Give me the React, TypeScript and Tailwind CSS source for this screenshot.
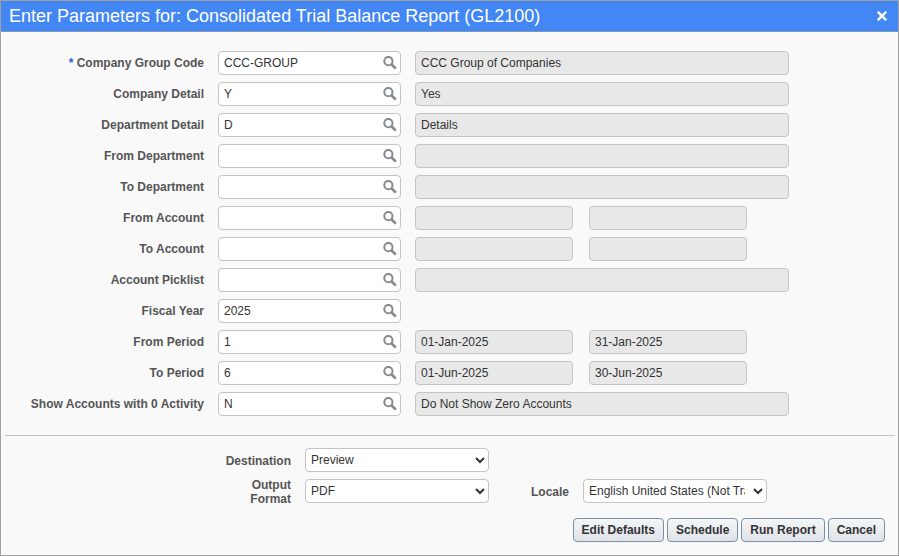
import { useId, useState } from "react";

type Param = {
  label: string;
  value: string;
  required?: boolean;
  wide?: string;
  pair?: [string, string];
};

const params: Param[] = [
  { label: "Company Group Code", value: "CCC-GROUP", required: true, wide: "CCC Group of Companies" },
  { label: "Company Detail", value: "Y", wide: "Yes" },
  { label: "Department Detail", value: "D", wide: "Details" },
  { label: "From Department", value: "", wide: "" },
  { label: "To Department", value: "", wide: "" },
  { label: "From Account", value: "", pair: ["", ""] },
  { label: "To Account", value: "", pair: ["", ""] },
  { label: "Account Picklist", value: "", wide: "" },
  { label: "Fiscal Year", value: "2025" },
  { label: "From Period", value: "1", pair: ["01-Jan-2025", "31-Jan-2025"] },
  { label: "To Period", value: "6", pair: ["01-Jun-2025", "30-Jun-2025"] },
  { label: "Show Accounts with 0 Activity", value: "N", wide: "Do Not Show Zero Accounts" },
];

const readOnlyBox =
  "h-6 rounded-[4px] border border-[#c4c4c4] bg-[#e8e8e8] px-[5px] text-xs text-[#333] outline-none";

const selectBox =
  "h-6 w-[184px] rounded-[4px] border border-[#c4c4c4] bg-white pr-[5px] pl-px text-xs text-[#333]";

const optionLabel = "pt-0.5 text-right leading-[14px] font-bold text-[#555]";

function SearchIcon() {
  return (
    <svg width="14" height="14" viewBox="0 0 14 14" fill="none" stroke="#858a8e" aria-hidden="true">
      <circle cx="5.4" cy="5.2" r="4.1" strokeWidth="2" />
      <path d="M8.4 8.2l4.4 4.4" strokeWidth="2.7" />
    </svg>
  );
}

function ParamRow({ label, value, required, wide, pair }: Param) {
  const id = useId();
  const [text, setText] = useState(value);
  return (
    <div className="flex items-center">
      <label htmlFor={id} className="w-[203px] shrink-0 text-right font-bold text-[#555]">
        {required && <span className="text-[#2a62c8]">* </span>}
        {label}
      </label>
      <div className="ml-3.5 flex h-6 w-[183px] shrink-0 items-center rounded-[4px] border border-[#c4c4c4] bg-white pr-[3px] pl-[5px]">
        <input
          id={id}
          value={text}
          onChange={(e) => setText(e.target.value)}
          className="min-w-0 flex-1 text-xs text-[#333] outline-none"
        />
        <button type="button" aria-label={`Look up ${label}`}>
          <SearchIcon />
        </button>
      </div>
      {wide !== undefined && (
        <input readOnly aria-label={`${label} description`} value={wide} className={`${readOnlyBox} ml-3.5 w-[374px]`} />
      )}
      {pair && (
        <div className="ml-3.5 flex gap-4">
          <input readOnly aria-label={`${label} first detail`} value={pair[0]} className={`${readOnlyBox} w-[158px]`} />
          <input readOnly aria-label={`${label} second detail`} value={pair[1]} className={`${readOnlyBox} w-[158px]`} />
        </div>
      )}
    </div>
  );
}

function ActionButton({ children }: { children: string }) {
  return (
    <button
      type="button"
      className="h-6 rounded-[4px] border border-[#7790a5] bg-linear-to-b from-[#f4f5f6] to-[#dfe3e8] px-2 font-bold text-[#333]"
    >
      {children}
    </button>
  );
}

export default function App() {
  return (
    <div className="flex min-h-screen flex-col border border-[#a0a0a0] bg-[#f9f9f9] font-['Liberation_Sans',Arial,sans-serif] text-xs text-[#333]">
      <header className="flex h-[31px] items-center justify-between border-b border-[#7f97bf] bg-[#4387f4] pr-[11px] pl-2 text-white">
        <h1 className="text-lg">Enter Parameters for: Consolidated Trial Balance Report (GL2100)</h1>
        <button type="button" aria-label="Close">
          <svg width="10" height="10" viewBox="0 0 10 10" stroke="white" strokeWidth="2.4" aria-hidden="true">
            <path d="M0.8 0.8L9.2 9.2M9.2 0.8L0.8 9.2" />
          </svg>
        </button>
      </header>

      <form className="flex flex-1 flex-col">
        <div className="flex flex-col gap-[7px] pt-[19px] pb-[19px]">
          {params.map((p) => (
            <ParamRow key={p.label} {...p} />
          ))}
        </div>

        <hr className="mr-[3px] ml-1 border-t border-[#c4c4c4]" />

        <div className="flex flex-col gap-[7px] pt-3">
          <div className="flex h-6 items-center">
            <label htmlFor="destination" className={`${optionLabel} w-[290px]`}>
              Destination
            </label>
            <select id="destination" className={`${selectBox} ml-3.5`}>
              <option>Preview</option>
            </select>
          </div>
          <div className="flex h-6 items-center">
            <label htmlFor="format" className={`${optionLabel} w-[290px]`}>
              Output
              <br />
              Format
            </label>
            <select id="format" className={`${selectBox} ml-3.5`}>
              <option>PDF</option>
            </select>
            <label htmlFor="locale" className={`${optionLabel} w-20`}>
              Locale
            </label>
            <select id="locale" className={`${selectBox} ml-3.5`}>
              <option>English United States (Not Translated)</option>
            </select>
          </div>
        </div>

        <div className="mt-[15px] mb-3 flex justify-end gap-[3px] pr-[13px]">
          <ActionButton>Edit Defaults</ActionButton>
          <ActionButton>Schedule</ActionButton>
          <ActionButton>Run Report</ActionButton>
          <ActionButton>Cancel</ActionButton>
        </div>
      </form>
    </div>
  );
}
